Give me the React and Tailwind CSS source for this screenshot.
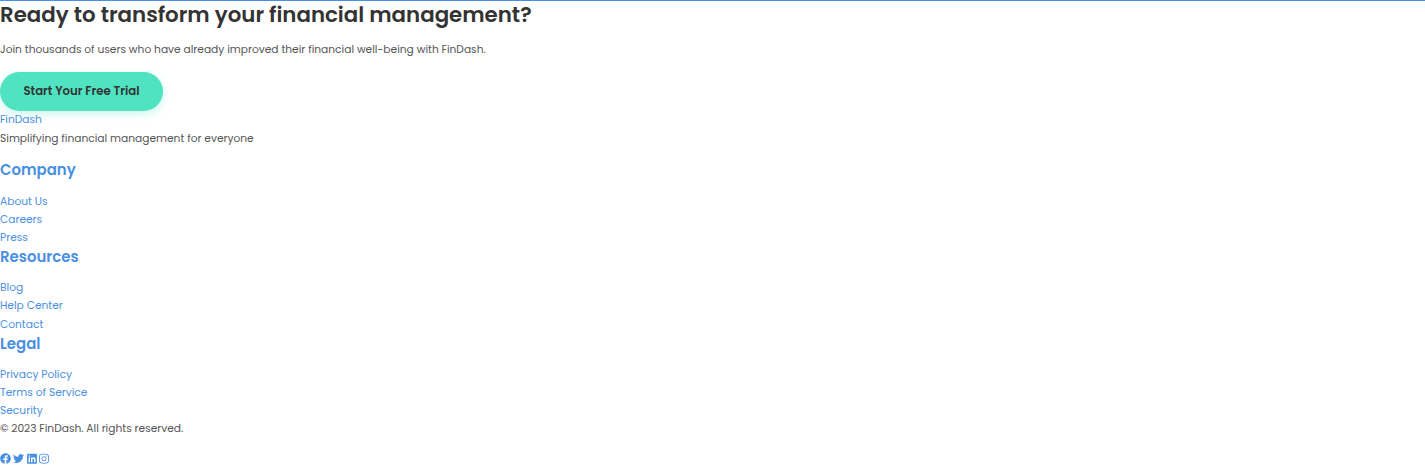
import { FaFacebook, FaTwitter, FaLinkedin, FaInstagram } from "react-icons/fa";

const groups = [
  { title: "Company", gap: "mb-[13.267px]", links: ["About Us", "Careers", "Press"] },
  { title: "Resources", gap: "mb-[12.767px]", links: ["Blog", "Help Center", "Contact"] },
  { title: "Legal", gap: "mb-[12.767px]", links: ["Privacy Policy", "Terms of Service", "Security"] },
];

export default function App() {
  return (
    <div className="h-[468px] overflow-hidden border-t border-[#4a90e2] bg-white font-[Poppins,Inter,sans-serif] text-[10.667px] leading-[18.133px] text-[#555]">
      <section>
        <h2 className="h-[28px] text-[21.333px] font-semibold leading-[27.7px] text-[#333]">
          Ready to transform your financial management?
        </h2>
        <p className="mt-[11.7px] mb-[13.17px]">
          Join thousands of users who have already improved their financial well-being with FinDash.
        </p>
        <button className="flex h-[39px] w-[163px] items-center justify-center whitespace-nowrap rounded-full bg-[#50e3c2] pb-px text-[11.733px] font-semibold text-[#333] shadow-[0_3px_8px_rgba(80,227,194,0.3)]">
          Start Your Free Trial
        </button>
      </section>
      <footer className="pt-[0.4px]">
        <a className="block text-[#4a90e2]">FinDash</a>
        <p className="mb-[12.35px]">Simplifying financial management for everyone</p>
        {groups.map((g) => (
          <div key={g.title}>
            <h3 className={`${g.gap} text-[14.933px] font-semibold leading-[19.4px] text-[#4a90e2]`}>
              {g.title}
            </h3>
            <ul>
              {g.links.map((label) => (
                <li key={label} className="text-[#4a90e2]"><a>{label}</a></li>
              ))}
            </ul>
          </div>
        ))}
        <p>© 2023 FinDash. All rights reserved.</p>
        <div className="mt-[14.2px] flex h-[12px] items-center gap-[2.2px] text-[#4a90e2]">
          <FaFacebook className="size-[11px]" />
          <FaTwitter className="mr-[0.4px] size-[11px]" />
          <FaLinkedin className="h-[11.36px] w-[10px]" />
          <FaInstagram className="h-[11.36px] w-[10px]" />
        </div>
      </footer>
    </div>
  );
}
